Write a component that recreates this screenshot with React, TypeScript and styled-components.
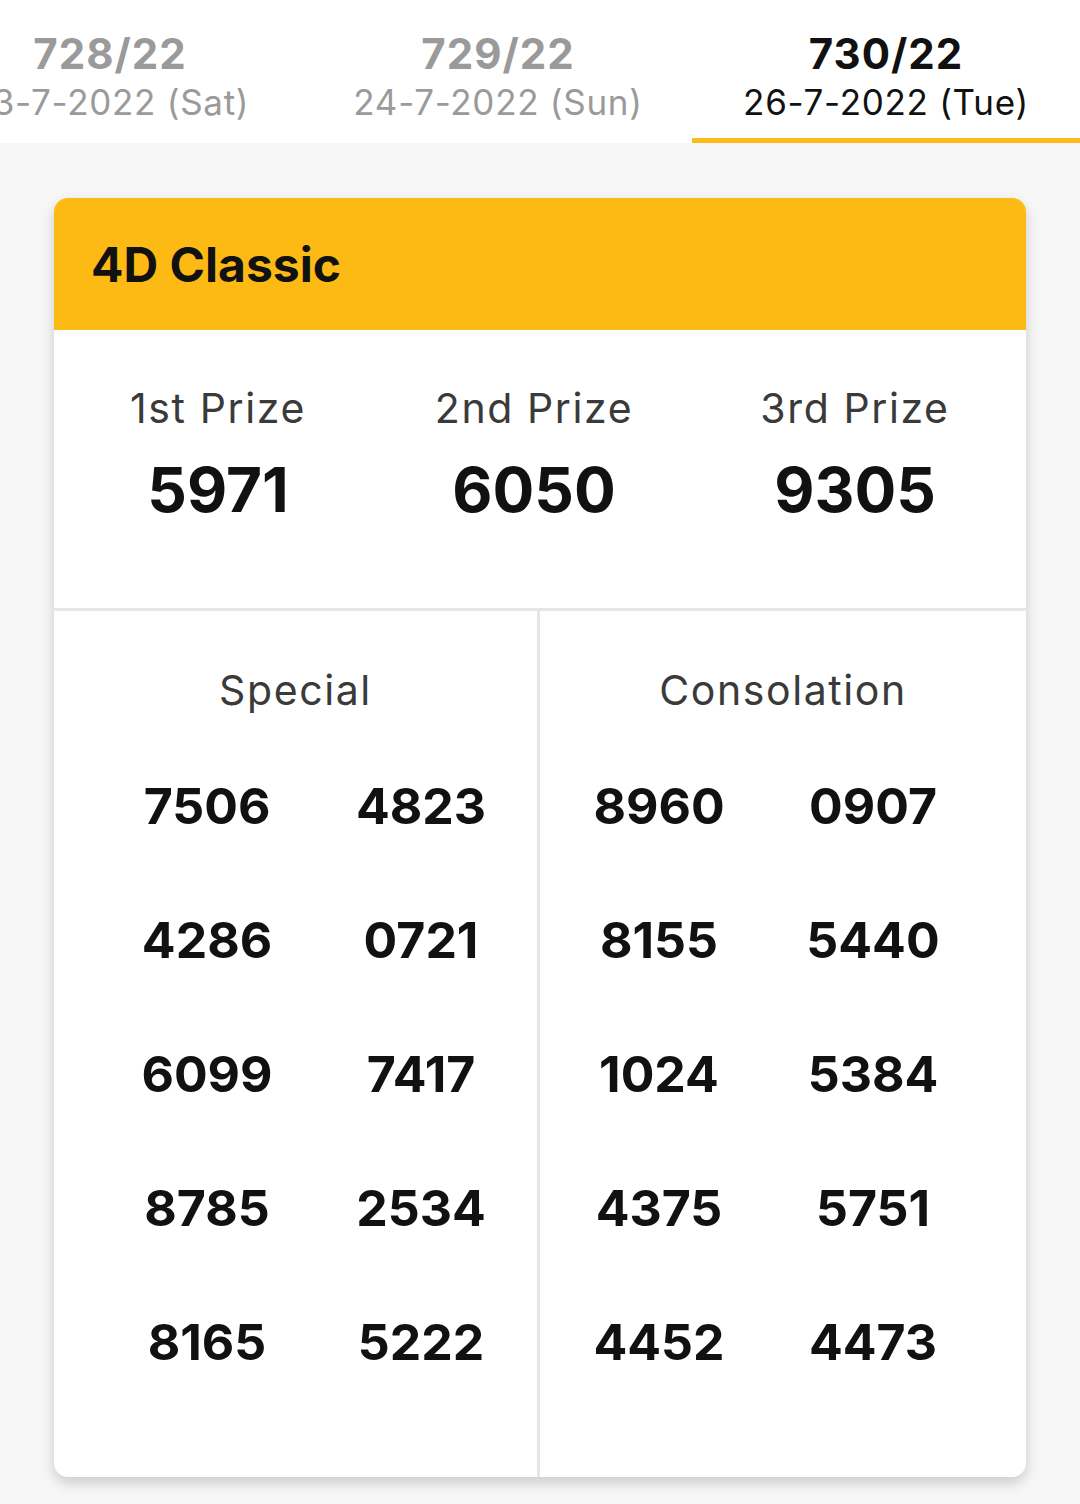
import React from "react";
import styled, { createGlobalStyle } from "styled-components";

const Global = createGlobalStyle`
  html, body { margin: 0; padding: 0; background: #f7f7f7; }
  body { font-family: Inter, "Noto Sans", sans-serif; width: 1080px; height: 1504px; overflow: hidden; }
`;

const TabBar = styled.div`
  background: #ffffff;
  height: 143px;
  overflow: hidden;
`;

const TabTrack = styled.div`
  display: flex;
  margin-left: -84px;
`;

const Tab = styled.div<{ $active?: boolean }>`
  flex: 0 0 388px;
  height: 143px;
  box-sizing: border-box;
  padding-top: 30px;
  border-bottom: 5px solid ${(p) => (p.$active ? "#fbbc1c" : "transparent")};
  display: flex;
  flex-direction: column;
  align-items: center;
  color: ${(p) => (p.$active ? "#111111" : "#9a9a9a")};
`;

const TabNum = styled.div`
  font-size: 42px;
  font-weight: 700;
  line-height: 48px;
  letter-spacing: 1px;
`;

const TabDate = styled.div`
  font-size: 35px;
  font-weight: 400;
  line-height: 48px;
  letter-spacing: 0.7px;
  white-space: nowrap;
`;

const Content = styled.div`
  padding: 55px 54px 0;
`;

const Card = styled.div`
  background: #ffffff;
  border-radius: 14px;
  overflow: hidden;
  box-shadow: 0 6px 14px rgba(0, 0, 0, 0.18);
`;

const CardHeader = styled.div`
  background: #fdba14;
  height: 132px;
  display: flex;
  align-items: center;
  padding-left: 37px;
  font-size: 48px;
  font-weight: 700;
  color: #111111;
`;

const PrizeRow = styled.div`
  display: grid;
  grid-template-columns: 1fr 1fr 1fr;
  padding: 53px 0 78px;
  border-bottom: 3px solid #e6e6e6;
`;

const Prize = styled.div<{ $shift: number }>`
  display: flex;
  flex-direction: column;
  align-items: center;
  gap: 17px;
  transform: translateX(${(p) => p.$shift}px);
`;

const Label = styled.div`
  font-size: 41px;
  line-height: 50px;
  letter-spacing: 1.6px;
  color: #3a3a3a;
  font-weight: 400;
`;

const BigNum = styled.div`
  font-size: 62px;
  line-height: 80px;
  font-weight: 700;
  color: #111111;
`;

const Lower = styled.div`
  display: grid;
  grid-template-columns: 1fr 1fr;
`;

const Half = styled.div<{ $divider?: boolean }>`
  padding: 54px 0 68px;
  border-right: ${(p) => (p.$divider ? "3px solid #e6e6e6" : "none")};
  display: flex;
  flex-direction: column;
  align-items: center;
  gap: 24px;
`;

const NumGrid = styled.div<{ $pl: number; $pr: number }>`
  align-self: stretch;
  display: grid;
  grid-template-columns: 1fr 1fr;
  padding-left: ${(p) => p.$pl}px;
  padding-right: ${(p) => p.$pr}px;
`;

const Num = styled.div`
  font-size: 50px;
  line-height: 134px;
  font-weight: 700;
  color: #111111;
  text-align: center;
`;

const tabs = [
  { num: "728/22", date: "23-7-2022 (Sat)" },
  { num: "729/22", date: "24-7-2022 (Sun)" },
  { num: "730/22", date: "26-7-2022 (Tue)", active: true },
];

const special = ["7506", "4823", "4286", "0721", "6099", "7417", "8785", "2534", "8165", "5222"];
const consolation = ["8960", "0907", "8155", "5440", "1024", "5384", "4375", "5751", "4452", "4473"];

export default function App() {
  return (
    <>
      <Global />
      <TabBar>
        <TabTrack>
          {tabs.map((t) => (
            <Tab key={t.num} $active={t.active}>
              <TabNum>{t.num}</TabNum>
              <TabDate>{t.date}</TabDate>
            </Tab>
          ))}
        </TabTrack>
      </TabBar>
      <Content>
        <Card>
          <CardHeader>4D Classic</CardHeader>
          <PrizeRow>
            <Prize $shift={2}>
              <Label>1st Prize</Label>
              <BigNum>5971</BigNum>
            </Prize>
            <Prize $shift={-6}>
              <Label>2nd Prize</Label>
              <BigNum>6050</BigNum>
            </Prize>
            <Prize $shift={-9}>
              <Label>3rd Prize</Label>
              <BigNum>9305</BigNum>
            </Prize>
          </PrizeRow>
          <Lower>
            <Half $divider>
              <Label>Special</Label>
              <NumGrid $pl={46} $pr={9}>
                {special.map((n) => (
                  <Num key={n}>{n}</Num>
                ))}
              </NumGrid>
            </Half>
            <Half>
              <Label>Consolation</Label>
              <NumGrid $pl={12} $pr={46}>
                {consolation.map((n) => (
                  <Num key={n}>{n}</Num>
                ))}
              </NumGrid>
            </Half>
          </Lower>
        </Card>
      </Content>
    </>
  );
}
